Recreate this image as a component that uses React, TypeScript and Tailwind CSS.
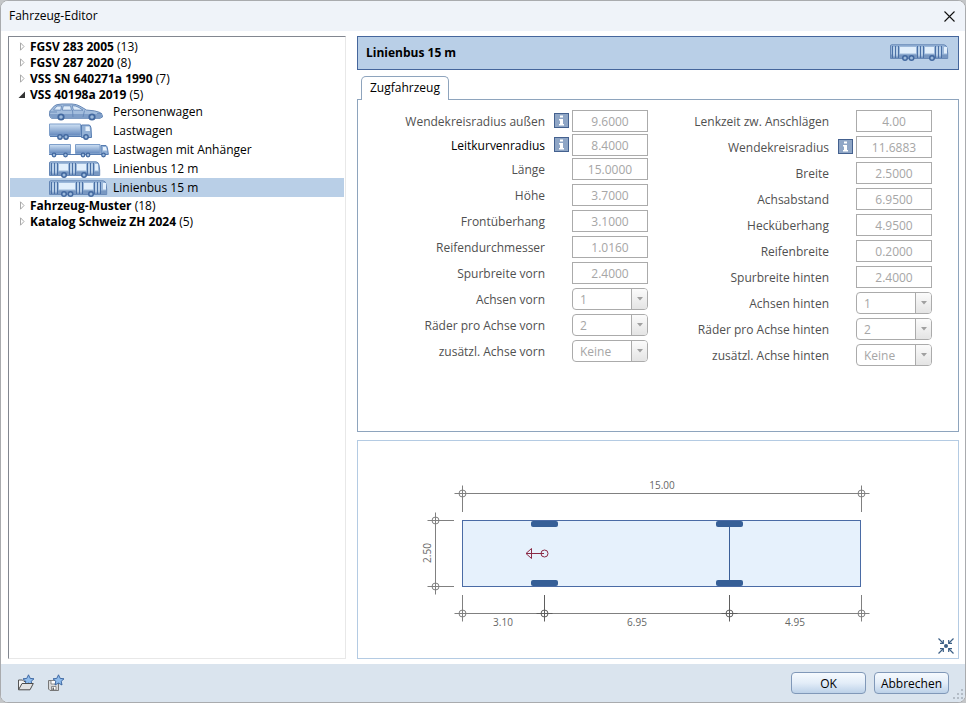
import { useState } from "react";
import clsx from "clsx";

type VehicleKind = "car" | "truck" | "trailer" | "bus12" | "bus15";

interface Vehicle {
  name: string;
  kind: VehicleKind;
}

interface Catalog {
  name: string;
  count: number;
  vehicles?: Vehicle[];
}

interface Field {
  id: string;
  label: string;
  value: string;
  info?: boolean;
  select?: boolean;
  active?: boolean;
}

const catalogs: Catalog[] = [
  { name: "FGSV 283 2005", count: 13 },
  { name: "FGSV 287 2020", count: 8 },
  { name: "VSS SN 640271a 1990", count: 7 },
  {
    name: "VSS 40198a 2019",
    count: 5,
    vehicles: [
      { name: "Personenwagen", kind: "car" },
      { name: "Lastwagen", kind: "truck" },
      { name: "Lastwagen mit Anhänger", kind: "trailer" },
      { name: "Linienbus 12 m", kind: "bus12" },
      { name: "Linienbus 15 m", kind: "bus15" },
    ],
  },
  { name: "Fahrzeug-Muster", count: 18 },
  { name: "Katalog Schweiz ZH 2024", count: 5 },
];

const turningFields: Field[] = [
  { id: "radius-outer", label: "Wendekreisradius außen", value: "9.6000", info: true },
  { id: "radius-guide", label: "Leitkurvenradius", value: "8.4000", info: true, active: true },
];

const frontFields: Field[] = [
  { id: "length", label: "Länge", value: "15.0000" },
  { id: "height", label: "Höhe", value: "3.7000" },
  { id: "front-overhang", label: "Frontüberhang", value: "3.1000" },
  { id: "tire-diameter", label: "Reifendurchmesser", value: "1.0160" },
  { id: "track-front", label: "Spurbreite vorn", value: "2.4000" },
  { id: "axles-front", label: "Achsen vorn", value: "1", select: true },
  { id: "wheels-front", label: "Räder pro Achse vorn", value: "2", select: true },
  { id: "extra-front", label: "zusätzl. Achse vorn", value: "Keine", select: true },
];

const rearFields: Field[] = [
  { id: "steering-time", label: "Lenkzeit zw. Anschlägen", value: "4.00" },
  { id: "radius", label: "Wendekreisradius", value: "11.6883", info: true },
  { id: "width", label: "Breite", value: "2.5000" },
  { id: "wheelbase", label: "Achsabstand", value: "6.9500" },
  { id: "rear-overhang", label: "Hecküberhang", value: "4.9500" },
  { id: "tire-width", label: "Reifenbreite", value: "0.2000" },
  { id: "track-rear", label: "Spurbreite hinten", value: "2.4000" },
  { id: "axles-rear", label: "Achsen hinten", value: "1", select: true },
  { id: "wheels-rear", label: "Räder pro Achse hinten", value: "2", select: true },
  { id: "extra-rear", label: "zusätzl. Achse hinten", value: "Keine", select: true },
];

const Wheel = ({ x, y, r = 3 }: { x: number; y: number; r?: number }) => (
  <g>
    <circle cx={x} cy={y} r={r} fill="#42689f" />
    <circle cx={x} cy={y} r={r / 2} fill="#9dbadb" />
  </g>
);

const Bus = ({ length, doors, windows, wheels }: { length: number; doors: number[]; windows: number[][]; wheels: number[] }) => (
  <g transform="translate(0 1)">
    <path d={`M1.5 .8H${length - 4}Q${length - 1.5} 1 ${length - 1} 4L${length - 0.3} 9V14.5H.5V2Q.5 .8 1.5 .8Z`} fill="#9cb8da" stroke="#6486b5" />
    <rect x="1" y="10.5" width={length - 2} height="3.7" fill="#7897c1" />
    {windows.map(([x, w]) => (
      <rect key={x} x={x} y="3" width={w} height="6.5" fill="#e2effc" />
    ))}
    {doors.map((x) => (
      <g key={x}>
        <path d={`M${x + 0.5} 2V14M${x + 3.5} 2V14M${x + 6.5} 2V14`} stroke="#4a70a6" />
        <path d={`M${x + 2} 3V12.5M${x + 5} 3V12.5`} stroke="#cfe1f4" strokeWidth="1.2" />
      </g>
    ))}
    {wheels.map((x) => (
      <Wheel key={x} x={x} y={14} r={3} />
    ))}
  </g>
);

const VehicleIcon = ({ kind }: { kind: VehicleKind }) => (
  <svg width="60" height="18" viewBox="0 0 60 18" fill="none" aria-hidden="true">
    <defs>
      <linearGradient id="body" x1="0" y1="0" x2="0" y2="1">
        <stop offset="0" stopColor="#cfe1f4" />
        <stop offset="1" stopColor="#6489bd" />
      </linearGradient>
    </defs>
    {kind === "car" && (
      <g>
        <path
          d="M.8 8L5.5 2.8Q7 1.3 13 1H23Q28 1.2 31 3.2L37.5 7Q47 7.5 51 9.5Q53.8 11 53.5 14L51 15.3H2.5Q.5 14 .5 12Z"
          fill="#a3bddd"
          stroke="#6687b5"
        />
        <path d="M1 11H53V13.5L51 15H3L1 13Z" fill="#7f9ec8" />
        <path
          d="M4.5 7L8 3H12.5L11.8 7.2ZM14.3 2.8H21.5L22.5 7.2H13.3ZM23.2 2.7Q27 2.6 30 4.5L34 7.2H24.5Z"
          fill="#dfecf9"
          stroke="#5f83b4"
          strokeWidth=".8"
        />
        <path d="M1 9H8M23.5 7L24 14M35.5 7.5L34 14M48 10.5H53" stroke="#5f83b4" strokeWidth=".8" />
        <Wheel x={12} y={14} r={3.6} />
        <Wheel x={43} y={14} r={3.6} />
      </g>
    )}
    {kind === "truck" && (
      <g>
        <path d="M.5 2H31.5V13.5H.5Z" fill="url(#body)" stroke="#7e9fca" />
        <path d="M32.5 3H40Q41.5 3 42 6L42.5 15.5H32.5Z" fill="#93b1d6" stroke="#557bb0" />
        <path d="M36.5 4.5H40.5L41 9H36.5Z" fill="#e6f1fc" />
        <path d="M1 14.5H33" stroke="#557bb0" />
        <Wheel x={11} y={15} r={2.9} />
        <Wheel x={17} y={15} r={2.9} />
        <Wheel x={37} y={15} r={2.9} />
      </g>
    )}
    {kind === "trailer" && (
      <g>
        <path d="M.5 3.5H21.5V12.5H.5ZM26.5 3.5H51V12.5H26.5Z" fill="url(#body)" stroke="#7e9fca" />
        <path d="M52 4.5H57Q58.5 5 59.3 13.5H52Z" fill="#93b1d6" stroke="#557bb0" />
        <path d="M54 6H57L58 9.5H54Z" fill="#e6f1fc" />
        <path d="M0 13.5H53" stroke="#557bb0" />
        <Wheel x={5} y={14} r={2.4} />
        <Wheel x={16.5} y={14} r={2.4} />
        <Wheel x={34} y={14} r={2.4} />
        <Wheel x={39} y={14} r={2.4} />
        <Wheel x={54.5} y={14} r={2.4} />
      </g>
    )}
    {kind === "bus12" && <Bus length={51} doors={[2, 20, 38]} windows={[[10, 9], [28, 9], [46, 3]]} wheels={[15, 35]} />}
    {kind === "bus15" && <Bus length={58} doors={[2, 27, 45]} windows={[[10, 16], [35, 9], [54, 3]]} wheels={[15, 21.5, 42]} />}
  </svg>
);

const InfoIcon = () => (
  <svg width="15" height="15" viewBox="0 0 15 15" role="img" aria-label="Info">
    <rect x=".5" y=".5" width="14" height="14" fill="#8fa6c6" stroke="#44618f" />
    <path d="M6 2.5H9V4.5H6ZM5 6H9V11H10V12.5H5V11H6V7.5H5Z" fill="#fff" />
  </svg>
);

const FieldRow = ({ field }: { field: Field }) => (
  <div className="flex items-center h-[22px]">
    <label htmlFor={field.id} className={clsx("flex-1 pt-[2px] text-right whitespace-nowrap", field.active ? "text-black" : "text-[#505050]")}>
      {field.label}
    </label>
    <span className="w-[15px] ml-[9px] mr-[3px] mb-[2px]">{field.info && <InfoIcon />}</span>
    {field.select ? (
      <span className="relative w-[76px] h-[22px]">
        <select id={field.id} disabled className="appearance-none w-full h-full pt-px px-[7px] border border-[#ababab] rounded-[4px] bg-white text-[#a6a6a6]">
          <option>{field.value}</option>
        </select>
        <span className="absolute right-px top-px bottom-px w-4 flex items-center justify-center border-l border-[#ababab] rounded-r-[3px] bg-linear-to-b from-[#fbfbfb] to-[#e4e4e4] pointer-events-none">
          <svg width="6" height="4" viewBox="0 0 6 4">
            <path d="M0 0H6L3 3.5Z" fill="#a0a0a0" />
          </svg>
        </span>
      </span>
    ) : (
      <input
        id={field.id}
        type="text"
        disabled
        defaultValue={field.value}
        className="w-[76px] h-[22px] border border-[#ababab] bg-white text-center text-[#a6a6a6]"
      />
    )}
  </div>
);

/* DIMENSION NODE: small circle with a cross through it */
const Node = ({ x, y }: { x: number; y: number }) => (
  <g>
    <circle cx={x} cy={y} r="3.5" />
    <path d={`M${x - 8} ${y}H${x + 8}M${x} ${y - 8}V${y + 8}`} />
  </g>
);

const VehiclePlan = () => (
  <svg className="block w-full h-[217px]" viewBox="0 0 600 217" fontFamily="'Open Sans', sans-serif" fontSize="10">
    <g fill="none" stroke="#808080">
      <path d="M104.5 52.5H503.5M104.5 52.5V71M503.5 52.5V71" />
      <path d="M77.5 79.5V145.5M77.5 79.5H96M77.5 145.5H96" />
      <path d="M104.5 172.5H503.5M104.5 172.5V154M186.5 172.5V154M371.5 172.5V154M503.5 172.5V154" />
      <Node x={104.5} y={52.5} />
      <Node x={503.5} y={52.5} />
      <Node x={77.5} y={79.5} />
      <Node x={77.5} y={145.5} />
      <Node x={104.5} y={172.5} />
      <Node x={503.5} y={172.5} />
      <g stroke="#5e5e5e">
        <Node x={186.5} y={172.5} />
        <Node x={371.5} y={172.5} />
        <path d="M186.5 172.5V154M371.5 172.5V154" />
      </g>
    </g>
    <rect x="104.5" y="79.5" width="398" height="66" fill="#e6f1fc" stroke="#4a6ba5" />
    <path d="M371.5 82V142" stroke="#3a5f98" />
    <g fill="#365f97">
      <rect x="173" y="80" width="27" height="6" rx="2" />
      <rect x="173" y="139" width="27" height="6" rx="2" />
      <rect x="358" y="80" width="27" height="6" rx="2" />
      <rect x="358" y="139" width="27" height="6" rx="2" />
    </g>
    <g fill="none" stroke="#8a2a45">
      <circle cx="186.5" cy="112.5" r="3.5" />
      <path d="M186 112.5H168M173.5 107.5V117.5L168 112.5Z" />
    </g>
    <g fill="#666" textAnchor="middle">
      <text x="304" y="48">15.00</text>
      <text x="145" y="185">3.10</text>
      <text x="279" y="185">6.95</text>
      <text x="437" y="185">4.95</text>
      <text transform="translate(73 112) rotate(-90)">2.50</text>
    </g>
  </svg>
);

const Star = () => (
  <path d="M11.5 .8L13.2 4.4L17 4.8L14.2 7.3L15 11L11.5 9.1L8 11L8.8 7.3L6 4.8L9.8 4.4Z" fill="#8fbcec" stroke="#335f9c" strokeWidth=".9" />
);

const App = () => {
  const [selected, setSelected] = useState<Vehicle>(catalogs[3].vehicles![4]);
  const [expanded, setExpanded] = useState("VSS 40198a 2019");

  return (
    <div className="bg-[#c4c6c8]">
      <div className="flex flex-col min-h-screen border border-[#a9abae] rounded-lg overflow-hidden bg-white text-xs leading-4 text-black font-['Open_Sans',sans-serif]">
        {/* TITLE BAR */}
        <header className="flex items-center justify-between h-[30px] pl-2 pr-[10px] bg-[#eff3f9]">
          <h1>Fahrzeug-Editor</h1>
          <button type="button" aria-label="Schließen">
            <svg width="11" height="11" viewBox="0 0 11 11" stroke="#111" strokeWidth="1.1">
              <path d="M.5 .5L10.5 10.5M10.5 .5L.5 10.5" />
            </svg>
          </button>
        </header>

        <main className="flex flex-1 gap-[11px] pt-[5px] pb-[5px] pl-[7px] pr-[6px]">
          {/* CATALOG TREE */}
          <nav className="w-[338px] shrink-0 p-px border border-[#e8e8e8] border-t-[#828790] border-l-[#828790]">
            <ul>
              {catalogs.map((catalog) => {
                const open = expanded === catalog.name && catalog.vehicles;
                return (
                  <li key={catalog.name}>
                    <button
                      type="button"
                      aria-expanded={!!open}
                      className="flex items-center h-4 w-full pt-[2px] pl-2 text-left"
                      onClick={() => setExpanded(open ? "" : catalog.name)}
                    >
                      <svg width="12" height="10" viewBox="0 0 12 10" fill="none">
                        {open ? <path d="M7 1.5V8H.5Z" fill="#333" /> : <path d="M2.5 .8V8.2L6 4.5Z" stroke="#a9a9a9" />}
                      </svg>
                      <span className="font-bold">{catalog.name}</span>
                      <span>&#160;({catalog.count})</span>
                    </button>
                    {open && (
                      <ul>
                        {catalog.vehicles!.map((vehicle) => (
                          <li key={vehicle.name}>
                            <button
                              type="button"
                              className={clsx("flex items-center gap-1 w-full h-[19px] pl-[39px] text-left", selected.name === vehicle.name && "bg-[#b9cfe7]")}
                              onClick={() => setSelected(vehicle)}
                            >
                              <VehicleIcon kind={vehicle.kind} />
                              {vehicle.name}
                            </button>
                          </li>
                        ))}
                      </ul>
                    )}
                  </li>
                );
              })}
            </ul>
          </nav>

          <div className="flex flex-col flex-1 min-w-0">
            {/* SELECTED VEHICLE */}
            <div className="flex items-center justify-between h-[34px] pl-2 pr-2 border border-[#45669c] bg-[#b9cfe7]">
              <h2 className="font-bold">{selected.name}</h2>
              <div className="mb-[2px]">
                <VehicleIcon kind={selected.kind} />
              </div>
            </div>

            {/* TABS */}
            <div role="tablist" className="mt-[6px] pl-1">
              <button
                type="button"
                role="tab"
                aria-selected="true"
                className="relative -mb-px block h-[24px] px-2 pb-[2px] border border-b-0 border-[#8ea4bd] rounded-t-[5px] bg-white"
              >
                Zugfahrzeug
              </button>
            </div>

            {/* PARAMETERS */}
            <section className="grid grid-cols-2 flex-1 pt-[10px] pl-[6px] pr-[26px] border border-[#8ea4bd]">
              <div>
                <div className="flex flex-col gap-[2px] mb-[2px]">
                  {turningFields.map((field) => (
                    <FieldRow key={field.id} field={field} />
                  ))}
                </div>
                <div className="flex flex-col gap-1">
                  {frontFields.map((field) => (
                    <FieldRow key={field.id} field={field} />
                  ))}
                </div>
              </div>
              <div className="flex flex-col gap-1">
                {rearFields.map((field) => (
                  <FieldRow key={field.id} field={field} />
                ))}
              </div>
            </section>

            {/* PREVIEW */}
            <section className="relative mt-2 border border-[#b4cbe3]">
              <VehiclePlan />
              <button type="button" aria-label="Einpassen" className="absolute right-1 bottom-1">
                <svg width="16" height="16" viewBox="0 0 16 16" fill="none" stroke="#3c5f85" strokeWidth="1.2">
                  <circle cx="8" cy="8" r="2" fill="#3c5f85" stroke="none" />
                  <path d="M.5 .5L5 5M15.5 .5L11 5M.5 15.5L5 11M15.5 15.5L11 11" />
                  <path d="M5.3 2V5.3H2M10.7 2V5.3H14M5.3 14V10.7H2M10.7 14V10.7H14" />
                </svg>
              </button>
            </section>
          </div>
        </main>

        {/* FOOTER */}
        <footer className="relative flex items-center gap-2 h-[38px] pl-4 pr-4 bg-[#dae4ee]">
          <button type="button" aria-label="Katalog öffnen" className="mr-1">
            <svg width="18" height="18" viewBox="0 0 18 18" fill="none">
              <path d="M1.5 15.5V6H5.5L7 7.5H13V10" fill="#f4f4f4" stroke="#555" />
              <Star />
              <path d="M1.5 15.8L5 9.5H16.3L13 15.8Z" fill="#e2e2e2" stroke="#4c4c4c" />
            </svg>
          </button>
          <button type="button" aria-label="Katalog speichern">
            <svg width="18" height="18" viewBox="0 0 18 18" fill="none">
              <path d="M1.5 6.5H11.5V16.5H3L1.5 15Z" fill="#d9dadb" stroke="#777" />
              <path d="M4 6.5H9V10H4ZM4.5 12.5H9V16H4.5Z" fill="#fff" stroke="#777" strokeWidth=".8" />
              <path d="M5.5 13.5H7V16H5.5Z" fill="#666" />
              <Star />
            </svg>
          </button>
          <span className="flex-1" />
          {["OK", "Abbrechen"].map((label) => (
            <button
              key={label}
              type="button"
              className="w-[75px] h-[22px] pt-px border border-[#8098b8] rounded-[4px] bg-linear-to-b from-[#f6fafe] via-[#e3edf8] to-[#bcd1e8]"
            >
              {label}
            </button>
          ))}
          <svg className="absolute right-0 bottom-px" width="12" height="12" viewBox="0 0 12 12" fill="#b3bcc6">
            <path d="M8 0H10V2H8ZM8 4H10V6H8ZM4 4H6V6H4ZM8 8H10V10H8ZM4 8H6V10H4ZM0 8H2V10H0Z" />
          </svg>
        </footer>
      </div>
    </div>
  );
};

export default App;
